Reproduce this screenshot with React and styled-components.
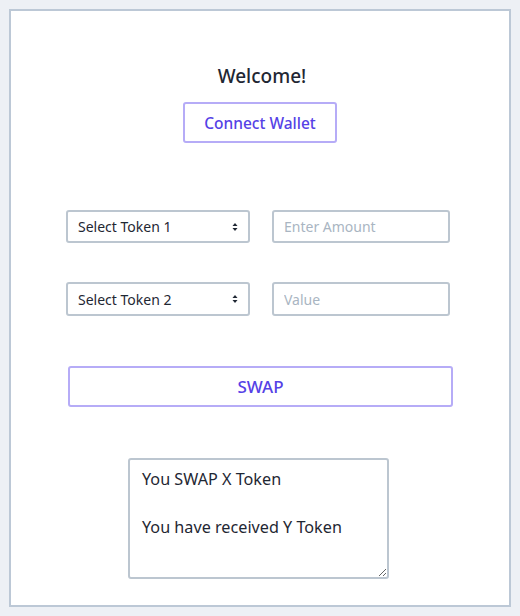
import React from "react";
import styled, { createGlobalStyle } from "styled-components";

const Global = createGlobalStyle`
  html, body { margin: 0; padding: 0; background: #edf0f5; }
  body { font-family: "Noto Sans", "DejaVu Sans", sans-serif; color: #1f2733; }
  * { box-sizing: border-box; }
`;

const Page = styled.div`
  padding: 9px;
  width: 520px;
  height: 616px;
`;

const Card = styled.div`
  width: 502px;
  height: 598px;
  background: #ffffff;
  border: 2px solid #bcc8d6;
  display: flex;
  flex-direction: column;
  align-items: flex-start;
  padding-top: 52px;
`;

const Title = styled.h1`
  align-self: center;
  margin: 0;
  font-size: 19px;
  font-weight: 500;
  line-height: 26px;
  color: #1f2733;
  transform: translateX(2px);
`;

const OutlineButton = styled.button`
  font-family: inherit;
  font-size: ${(p) => p.$fs || 17}px;
  font-weight: 500;
  color: #5541e6;
  background: #fff;
  border: 2px solid #b6acf7;
  border-radius: 3px;
  height: 41px;
  cursor: pointer;
  padding: 0;
`;

const ConnectButton = styled(OutlineButton)`
  align-self: center;
  width: 154px;
  margin-top: 13px;
`;

const FieldRow = styled.div`
  display: flex;
  gap: 22px;
  margin-left: 55px;
  margin-top: ${(p) => p.$top}px;
`;

const SelectWrap = styled.div`
  position: relative;
  width: 184px;
  height: ${(p) => p.$h}px;
`;

const Select = styled.select`
  appearance: none;
  -webkit-appearance: none;
  width: 100%;
  height: 100%;
  font-family: inherit;
  font-size: 14px;
  color: #1f2733;
  background: #fff;
  border: 2px solid #bcc6d0;
  border-radius: 3px;
  padding: 0 28px 0 10px;
  outline: none;
`;

const Arrow = styled.svg`
  position: absolute;
  right: 11px;
  top: 50%;
  transform: translateY(-50%);
  pointer-events: none;
`;

const Input = styled.input`
  width: 178px;
  height: ${(p) => p.$h}px;
  font-family: inherit;
  font-size: 14px;
  color: #1f2733;
  border: 2px solid #bcc6d0;
  border-radius: 3px;
  padding: 0 10px;
  outline: none;
  &::placeholder { color: #a9b5c2; }
`;

const SwapButton = styled(OutlineButton)`
  width: 385px;
  margin-left: 57px;
  margin-top: 50px;
`;

const Output = styled.textarea`
  width: 261px;
  height: 121px;
  margin-left: 117px;
  margin-top: 51px;
  font-family: inherit;
  font-size: 16.2px;
  line-height: 24px;
  color: #1f2733;
  border: 2px solid #bcc6d0;
  border-radius: 3px;
  padding: 7px 12px;
  outline: none;
  resize: both;
`;

const UpDown = () => (
  <Arrow width="8" height="12" viewBox="0 0 8 12">
    <path d="M4 2 L6.5 5 L1.5 5 Z" fill="#1f2733" />
    <path d="M4 10 L6.5 7 L1.5 7 Z" fill="#1f2733" />
  </Arrow>
);

export default function App() {
  return (
    <>
      <Global />
      <Page>
        <Card>
          <Title>Welcome!</Title>
          <ConnectButton $fs={15.5}>Connect Wallet</ConnectButton>
          <FieldRow $top={67}>
            <SelectWrap $h={33}>
              <Select defaultValue="">
                <option value="">Select Token 1</option>
              </Select>
              <UpDown />
            </SelectWrap>
            <Input $h={33} placeholder="Enter Amount" />
          </FieldRow>
          <FieldRow $top={39}>
            <SelectWrap $h={34}>
              <Select defaultValue="">
                <option value="">Select Token 2</option>
              </Select>
              <UpDown />
            </SelectWrap>
            <Input $h={34} placeholder="Value" />
          </FieldRow>
          <SwapButton>SWAP</SwapButton>
          <Output
            readOnly
            value={"You SWAP X Token\n\nYou have received Y Token"}
          />
        </Card>
      </Page>
    </>
  );
}
